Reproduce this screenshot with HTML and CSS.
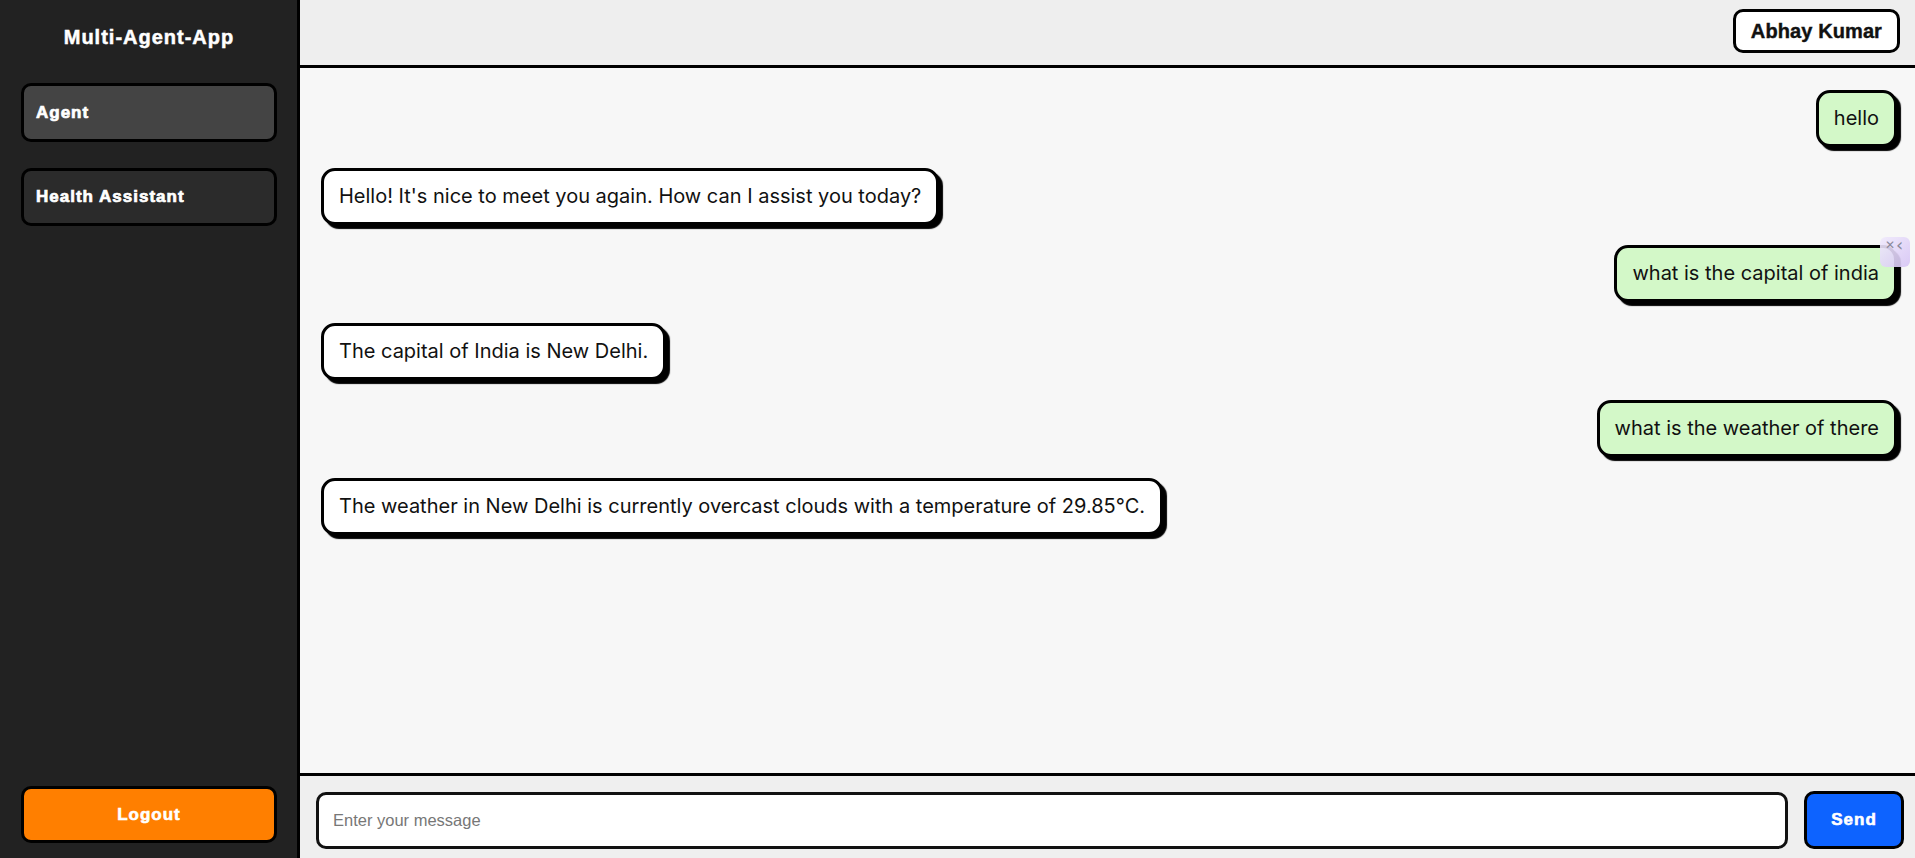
FILE: index.html
```html
<!DOCTYPE html>
<html lang="en">
<head>
<meta charset="utf-8">
<title>Multi-Agent-App</title>
<link rel="stylesheet" href="styles.css">
</head>
<body>
<div class="app">
  <aside class="sidebar">
    <div class="title">Multi-Agent-App</div>
    <div class="nav-btn active">Agent</div>
    <div class="nav-btn">Health Assistant</div>
    <div class="logout">Logout</div>
  </aside>
  <main class="main">
    <header class="header">
      <div class="user">Abhay Kumar</div>
    </header>
    <section class="messages">
      <div class="msg user-msg">hello</div>
      <div class="msg bot-msg">Hello! It's nice to meet you again. How can I assist you today?</div>
      <div class="msg user-msg">what is the capital of india</div>
      <div class="msg bot-msg">The capital of India is New Delhi.</div>
      <div class="msg user-msg">what is the weather of there</div>
      <div class="msg bot-msg">The weather in New Delhi is currently overcast clouds with a temperature of 29.85°C.</div>
    </section>
    <footer class="composer">
      <input class="input" type="text" placeholder="Enter your message">
      <button class="send">Send</button>
    </footer>
  </main>
</div>
<div class="ext-widget"><span class="ext-x">✕</span><span class="ext-chev">‹</span></div>
</body>
</html>
```

FILE: styles.css
```css
* { box-sizing: border-box; }
html, body { margin: 0; padding: 0; height: 100%; }
body {
  font-family: "Liberation Sans", Arial, sans-serif;
  background: #f7f7f7;
  overflow: hidden;
}
.app {
  display: flex;
  height: 858px;
}
.sidebar {
  width: 300px;
  flex: none;
  background: #222222;
  border-right: 3px solid #000;
  display: flex;
  flex-direction: column;
  padding: 25px 20px 15px 21px;
}
.title {
  color: #fff;
  font-size: 20px;
  font-weight: 700;
  letter-spacing: 1px;
  line-height: 24px;
  text-align: center;
  margin-bottom: 34px;
  -webkit-text-stroke: 0.5px #fff;
}
.nav-btn {
  height: 59px;
  border: 3px solid #000;
  border-radius: 10px;
  background: #2b2b2b;
  color: #fff;
  font-size: 17px;
  font-weight: 700;
  letter-spacing: 1px;
  display: flex;
  align-items: center;
  padding: 0 12px;
  -webkit-text-stroke: 0.7px #fff;
}
.nav-btn.active { background: #444444; }
.nav-btn + .nav-btn { margin-top: 26px; height: 58px; }
.logout {
  margin-top: auto;
  height: 57px;
  border: 3px solid #000;
  border-radius: 10px;
  background: #ff7f00;
  color: #fff;
  font-size: 17px;
  font-weight: 700;
  letter-spacing: 1px;
  display: flex;
  align-items: center;
  justify-content: center;
  -webkit-text-stroke: 0.6px #fff;
}
.main {
  flex: 1;
  display: flex;
  flex-direction: column;
  min-width: 0;
}
.header {
  height: 68px;
  flex: none;
  background: #eeeeee;
  border-bottom: 3px solid #000;
  display: flex;
  justify-content: flex-end;
  align-items: flex-start;
  padding: 9px 15px 0 0;
}
.user {
  height: 44px;
  padding: 0 15px;
  border: 3px solid #000;
  border-radius: 10px;
  background: #fff;
  color: #111;
  font-size: 20px;
  font-weight: 700;
  letter-spacing: 0.1px;
  display: flex;
  align-items: center;
  -webkit-text-stroke: 0.4px #111;
}
.messages {
  flex: 1;
  background: #f7f7f7;
  display: flex;
  flex-direction: column;
  gap: 20.6px;
  padding: 22px 18px 0 21px;
  overflow: hidden;
}
.msg {
  font-family: Inter, "Noto Sans", sans-serif;
  font-size: 20px;
  line-height: 25px;
  color: #111;
  padding: 13px 15px;
  border: 3px solid #000;
  border-radius: 14px;
  box-shadow: 4px 4px 1px #000;
  max-width: 80%;
}
.user-msg {
  align-self: flex-end;
  background: #d3f8c8;
}
.bot-msg {
  align-self: flex-start;
  background: #ffffff;
}
.composer {
  height: 85px;
  flex: none;
  background: #efefef;
  border-top: 3px solid #000;
  display: flex;
  align-items: flex-start;
  gap: 16px;
  padding: 16px 11px 0 16px;
}
.input {
  flex: 1;
  height: 57px;
  border: 3px solid #111;
  border-radius: 10px;
  background: #fff;
  padding: 0 14px;
  font-family: "Liberation Sans", Arial, sans-serif;
  font-size: 16.5px;
  color: #111;
  outline: none;
}
.input::placeholder { color: #777; }
.send {
  width: 100px;
  height: 58px;
  margin-top: -1px;
  border: 3px solid #000;
  border-radius: 10px;
  background: #0d63ff;
  color: #fff;
  font-family: "Liberation Sans", Arial, sans-serif;
  font-size: 17px;
  font-weight: 700;
  letter-spacing: 1px;
  -webkit-text-stroke: 0.6px #fff;
}
.ext-widget {
  position: absolute;
  left: 1880px;
  top: 237px;
  width: 30px;
  height: 30px;
  border-radius: 6px;
  background: linear-gradient(135deg, rgba(240,234,252,0.9), rgba(214,196,245,0.9));
  color: #8a8a9a;
  font-family: "DejaVu Sans", sans-serif;
}
.ext-x {
  position: absolute;
  left: 5px;
  top: 1px;
  font-size: 12px;
}
.ext-chev {
  position: absolute;
  left: 16px;
  top: -3px;
  font-size: 18px;
}
```
